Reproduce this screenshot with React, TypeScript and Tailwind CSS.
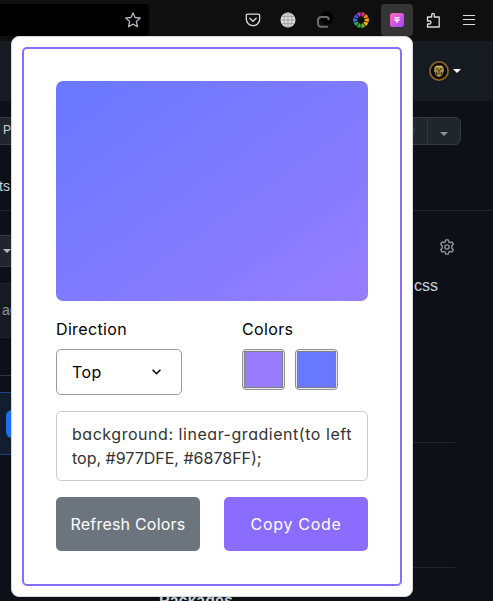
import React from "react";

const wheel = ["#e8384f", "#f58a1f", "#f9ab00", "#f6b51e", "#7cb518", "#35a84a", "#2fa866", "#3b6fe8", "#5546dc", "#a23bd0"];

function Star() {
  return (
    <svg className="size-[18px]" viewBox="0 0 18 18" fill="none" stroke="#b4b4b8" strokeWidth="1.3" strokeLinejoin="round">
      <path d="M9 1.8l2 4.7 5.2.5-3.9 3.5 1.2 5.3L9 13.1l-4.5 2.7 1.2-5.3L1.8 7 7 6.500z" />
    </svg>
  );
}

function Pocket() {
  return (
    <svg className="size-4" viewBox="0 0 16 16" fill="none" stroke="#dcdcdc" strokeWidth="1.3" strokeLinecap="round" strokeLinejoin="round">
      <path d="M2.6 2.2h10.8a1.3 1.3 0 0 1 1.3 1.3V7a6.7 6.7 0 0 1-13.4 0V3.500a1.300 1.300 0 0 1 1.300-1.300z" />
      <path d="M4.800 6.200L8 9.300l3.200-3.100" />
    </svg>
  );
}

function Globe() {
  return (
    <svg className="size-4" viewBox="0 0 16 16" fill="none" stroke="#88898b" strokeWidth=".7">
      <circle cx="8" cy="8" r="7.500" fill="#dedede" stroke="none" />
      <path d="M8 .5v15M.5 8h15M1.800 4.300h12.400M1.800 11.700h12.400" />
      <ellipse cx="8" cy="8" rx="4" ry="7.500" />
    </svg>
  );
}

function Curl() {
  return (
    <svg className="size-[18px]" viewBox="0 0 18 18" fill="none">
      <circle cx="11" cy="7" r="6.500" fill="#000" />
      <path d="M12.500 9V8Q12.500 6 10.500 6H5.500Q2 6 2 9.500v2.700Q2 15.700 5.500 15.700h6.300" stroke="#6e6e6e" strokeWidth="2" />
    </svg>
  );
}

function Wheel() {
  return (
    <svg className="size-4" viewBox="-8 -8 16 16">
      {wheel.map((c, i) => (
        <path key={c} d="M-.8-3.600L-2-7.500Q0-8.300 2-7.500L.8-3.600z" fill={c} transform={`rotate(${i * 36 + 18})`} />
      ))}
    </svg>
  );
}

function GradientIcon() {
  return (
    <svg className="size-[14px]" viewBox="0 0 14 14">
      <defs>
        <linearGradient id="ext" x1="0" y1="0" x2="1" y2="1">
          <stop stopColor="#ff67ac" />
          <stop offset=".5" stopColor="#d557e8" />
          <stop offset="1" stopColor="#9b45f5" />
        </linearGradient>
      </defs>
      <rect width="14" height="14" rx="2.500" fill="url(#ext)" />
      <path d="M4.500 4h5v1.500h-5zM4.500 6.200h5v1.300L7.800 8.600v1.200H6.200V8.600L4.500 7.500z" fill="#fff" opacity=".9" />
    </svg>
  );
}

function Puzzle() {
  return (
    <svg className="size-4" viewBox="0 0 16 16" fill="none" stroke="#dcdcdc" strokeWidth="1.300" strokeLinejoin="round">
      <path d="M2.500 7V5h4.200V2.800a1.300 1.300 0 0 1 2.600 0V5h4.900v10H2.500v-3h2a1.500 1.500 0 0 0 0-3h-2z" />
    </svg>
  );
}

function Gear() {
  return (
    <svg className="size-4" viewBox="0 0 16 16" fill="none" stroke="#8b949e" strokeWidth="1.400" strokeLinejoin="round">
      <path d="M6.700.9h2.600l.5 2 1.200.7 2-.6 1.300 2.200-1.500 1.500v2.600l1.500 1.500L13 13l-2-.6-1.200.7-.5 2H6.700l-.5-2-1.200-.7-2 .6-1.300-2.200 1.500-1.500V6.700L1.700 5.200 3 3l2 .6 1.200-.7z" />
      <circle cx="8" cy="8" r="2.100" />
    </svg>
  );
}

function Lion() {
  return (
    <svg className="size-5" viewBox="0 0 20 20" fill="none">
      <circle cx="10" cy="10" r="9.100" fill="#080704" stroke="#8c6526" strokeWidth="1.700" />
      <path d="M5.500 6L8 4.200l2 .6 2-.6L14.500 6l.5 4-2 4.500-3 1.700-3-1.700L5 10z" fill="#a58c42" />
      <path d="M7.300 7.800l2 .8M12.700 7.800l-2 .8M10 9v2M8 14l-.8-3M12 14l.8-3M8.800 12.200h2.400" stroke="#1b1507" strokeWidth=".9" />
      <path d="M6.500 6.500L8 5.500h4l1.500 1" stroke="#e0c878" strokeWidth=".8" />
    </svg>
  );
}

function Caret({ className }: { className: string }) {
  return (
    <svg className={className} viewBox="0 0 8 4" fill="currentColor">
      <path d="M0 0h8L4 4z" />
    </svg>
  );
}

function Toolbar() {
  return (
    <div className="flex h-[41px] bg-[#0f0f0f] pt-1">
      <div className="flex h-8 w-[149px] items-center justify-end rounded-r-[4px] bg-black pr-[7px]">
        <Star />
      </div>
      <div className="ml-[88px] flex h-8 items-center">
        <div className="flex w-8 justify-center"><Pocket /></div>
        <div className="ml-[3px] flex w-8 justify-center"><Globe /></div>
        <div className="ml-[3px] flex w-9 justify-center"><Curl /></div>
        <div className="ml-[2px] flex w-8 justify-center"><Wheel /></div>
        <div className="ml-1 flex h-8 w-8 items-center justify-center rounded-[4px] bg-[#353535]"><GradientIcon /></div>
        <div className="ml-1 flex w-8 justify-center"><Puzzle /></div>
        <div className="ml-1 flex w-8 justify-center">
          <svg className="h-3 w-3" viewBox="0 0 12 12" stroke="#dcdcdc" strokeWidth="1.100">
            <path d="M0 1.500h12M0 5.500h12M0 10.500h12" />
          </svg>
        </div>
      </div>
    </div>
  );
}

function Page() {
  return (
    <div className="flex h-[601px] flex-col bg-[#0d1117]">
      <Toolbar />
      <div className="flex h-[60px] items-center justify-end gap-1 bg-[#161b22] pr-8">
        <Lion />
        <Caret className="h-1 w-2 text-white" />
      </div>
      <div className="flex h-[110px] justify-between border-b border-[#21262d] pt-4">
        <div className="w-[100px]">
          <div className="h-7 border-y border-[#363b42] bg-[#21262d] pl-[3px] text-[12px] leading-[25px] text-[#c9d1d9]">Pin</div>
          <div className="mt-[30px] -ml-px text-[14px] leading-[22px] text-[#c9d1d9]">ts</div>
        </div>
        <div className="mr-8 flex h-7 w-[80px] rounded-[6px] border border-[#363b42] bg-[#21262d]">
          <div className="flex flex-1 items-center justify-end border-r border-[#363b42] pr-3">
            <div className="h-4 w-5 rounded-full bg-[#30363d]" />
          </div>
          <div className="flex w-8 items-center justify-center pt-[5px] text-[#8b949e]"><Caret className="h-1 w-2" /></div>
        </div>
      </div>
      <div className="flex flex-1 justify-between">
        <div className="w-[100px] pt-6">
          <div className="flex h-8 items-center border-y border-[#363b42] bg-[#21262d] pl-[3px] text-[#b1bac4]"><Caret className="h-1 w-2" /></div>
          <div className="mt-4 h-[55px] border-y border-[#21262d] bg-[#161b22] pl-[2px] text-[14px] leading-[52px] text-[#8b949e]">a<span className="text-[#2f81f7]">d</span></div>
          <div className="mt-[37px] h-px bg-[#30363d]" />
          <div className="mt-4 h-[63px] border-y border-[#1d4583] bg-[#121d2f] pt-[17px] pl-[6px]">
            <div className="h-7 w-20 rounded-[6px] bg-[#1f6feb]" />
          </div>
        </div>
        <div className="flex-1 self-end pl-[59px]">
          <div className="h-3 text-[16px] leading-6 font-semibold text-[#c9d1d9]">Packages</div>
        </div>
        <div className="w-[83px] pr-[38px]">
          <div className="flex h-[52px] justify-end pt-7"><Gear /></div>
          <div className="mt-[11px] h-6 pl-1 text-[16px] leading-6 text-[#c9d1d9]">css</div>
          <div className="mt-[144px] h-px bg-[#21262d]" />
          <div className="mt-[124px] h-px bg-[#21262d]" />
        </div>
      </div>
    </div>
  );
}

function Swatch({ color }: { color: string }) {
  return (
    <div className="h-[41px] w-[43px] rounded-[4px] border border-[#8f8f9d] bg-[#e9e9ed] p-px">
      <div className={`h-full border border-[#808080] ${color}`} />
    </div>
  );
}

function Popup() {
  return (
    <div className="absolute top-9 left-[11px] h-[561px] w-[402px] rounded-[8px] border border-[#d8d8dc] bg-white p-[10px] font-['Inter','Noto_Sans',sans-serif] text-[16px] leading-6 text-black [font-feature-settings:'cv11']">
      <div className="h-[539px] w-[380px] rounded-[5px] border-2 border-[#8a6cff] p-8">
        <div className="h-[220px] rounded-[7px] bg-[linear-gradient(to_left_top,#977DFE,#6878FF)]" />
        <div className="mt-4 grid grid-cols-[126px_96px] gap-x-[60px]">
          <div>
            <div className="h-8 leading-6 tracking-[0.35px]">Direction</div>
            <div className="flex h-[46px] items-center justify-between rounded-[5px] border border-[#999] pr-5 pl-[15px]">
              <span className="tracking-[0.4px]">Top</span>
              <svg className="h-[6px] w-[9px]" viewBox="0 0 9 6" fill="none" stroke="#000" strokeWidth="1.600"><path d="M.6.8l3.900 3.900L8.400.8" /></svg>
            </div>
          </div>
          <div>
            <div className="h-8 leading-6 tracking-[0.35px]">Colors</div>
            <div className="flex gap-[10px]">
              <Swatch color="bg-[#977dfe]" />
              <Swatch color="bg-[#6878ff]" />
            </div>
          </div>
        </div>
        <div className="mt-4 h-[70px] rounded-[5px] border border-[#ccc] px-[15px] pt-[10px] whitespace-nowrap text-[#333]">
          <div className="tracking-[0.54px]">background: linear-gradient(to left</div>
          <div>top, #977DFE, #6878FF);</div>
        </div>
        <div className="mt-4 flex gap-6 text-white">
          <button className="h-[54px] w-36 rounded-[5px] bg-[#6c757d] tracking-[0.2px] whitespace-nowrap">Refresh Colors</button>
          <button className="h-[54px] w-36 rounded-[5px] bg-[#8a6cff] tracking-[0.7px] whitespace-nowrap">Copy Code</button>
        </div>
      </div>
    </div>
  );
}

export default function App() {
  return (
    <div className="relative h-[601px] w-[493px] overflow-hidden font-['Liberation_Sans',Arial,sans-serif]">
      <Page />
      <Popup />
    </div>
  );
}
